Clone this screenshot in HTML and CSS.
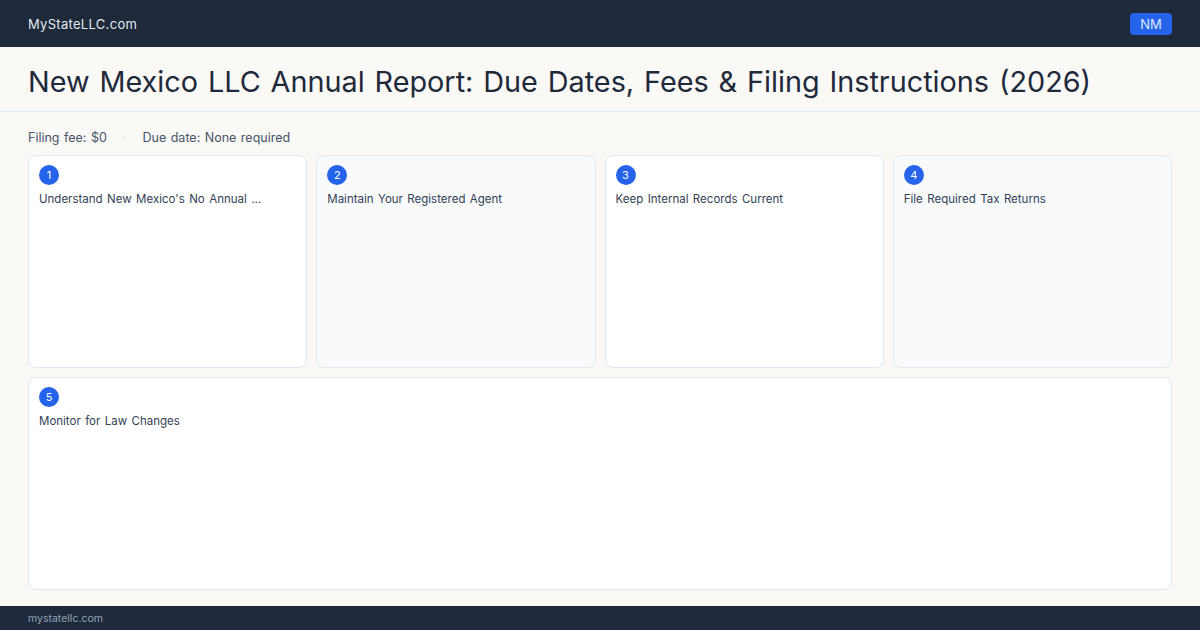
FILE: index.html
```html
<!DOCTYPE html>
<html lang="en">
<head>
<meta charset="utf-8">
<title>New Mexico LLC Annual Report</title>
<link rel="stylesheet" href="styles.css">
</head>
<body>
<div class="page">
  <header class="topbar">
    <span class="brand">MyStateLLC.com</span>
    <span class="state-tag">NM</span>
  </header>
  <section class="title-bar">
    <h1>New Mexico LLC Annual Report: Due Dates, Fees &amp; Filing Instructions (2026)</h1>
  </section>
  <main class="content">
    <div class="meta">
      <span>Filing fee: $0</span>
      <span class="sep">·</span>
      <span>Due date: None required</span>
    </div>
    <div class="steps">
      <div class="step">
        <span class="num">1</span>
        <p class="step-title">Understand New Mexico's No Annual …</p>
      </div>
      <div class="step alt">
        <span class="num">2</span>
        <p class="step-title">Maintain Your Registered Agent</p>
      </div>
      <div class="step">
        <span class="num">3</span>
        <p class="step-title">Keep Internal Records Current</p>
      </div>
      <div class="step alt">
        <span class="num">4</span>
        <p class="step-title">File Required Tax Returns</p>
      </div>
      <div class="step wide">
        <span class="num">5</span>
        <p class="step-title">Monitor for Law Changes</p>
      </div>
    </div>
  </main>
  <footer class="footer">mystatellc.com</footer>
</div>
</body>
</html>
```

FILE: styles.css
```css
* { box-sizing: border-box; }

html, body {
  margin: 0;
  padding: 0;
  height: 100%;
}

body {
  font-family: Inter, "Noto Sans", "Liberation Sans", sans-serif;
  background: #faf9f6;
  color: #1e293b;
}

.page {
  height: 630px;
  display: flex;
  flex-direction: column;
}

.topbar {
  height: 47px;
  flex: none;
  background: #1e293b;
  display: flex;
  align-items: center;
  justify-content: space-between;
  padding: 0 28px;
}

.brand {
  color: #e2e8f0;
  font-size: 13px;
  letter-spacing: 0.3px;
}

.state-tag {
  background: #2563eb;
  color: #e0e7ff;
  font-size: 13px;
  border-radius: 4px;
  height: 22px;
  line-height: 22px;
  width: 42px;
  text-align: center;
}

.title-bar {
  height: 65px;
  flex: none;
  border-bottom: 1px solid #e2e8f0;
  display: flex;
  align-items: center;
  padding: 5px 28px 0;
}

.title-bar h1 {
  margin: 0;
  font-size: 28.8px;
  font-weight: 400;
  color: #1e293b;
  word-spacing: 1.8px;
}

.content {
  flex: 1;
  display: flex;
  flex-direction: column;
  padding: 16px 28px 16px;
  min-height: 0;
}

.meta {
  display: flex;
  align-items: center;
  gap: 16px;
  font-size: 12.5px;
  color: #475569;
  height: 18px;
  word-spacing: 1px;
}

.meta .sep {
  color: #cbd5e1;
}

.steps {
  flex: 1;
  margin-top: 9px;
  display: grid;
  grid-template-columns: repeat(4, 1fr);
  grid-template-rows: 1fr 1fr;
  gap: 9px;
}

.step {
  background: #ffffff;
  border: 1px solid #e2e8f0;
  border-radius: 8px;
  padding: 9px 10px;
}

.step.alt { background: #f8fafc; }

.step.wide { grid-column: 1 / -1; }

.num {
  display: flex;
  align-items: center;
  justify-content: center;
  width: 20px;
  height: 20px;
  border-radius: 50%;
  background: #2563eb;
  color: #ffffff;
  font-size: 11px;
}

.step-title {
  margin: 6px 0 0;
  font-size: 11.5px;
  line-height: 16px;
  color: #334155;
  white-space: nowrap;
  overflow: hidden;
  word-spacing: 1.2px;
}

.footer {
  height: 24px;
  flex: none;
  background: #1e293b;
  color: #94a3b8;
  font-size: 10.5px;
  display: flex;
  align-items: center;
  padding: 0 28px;
}
```
